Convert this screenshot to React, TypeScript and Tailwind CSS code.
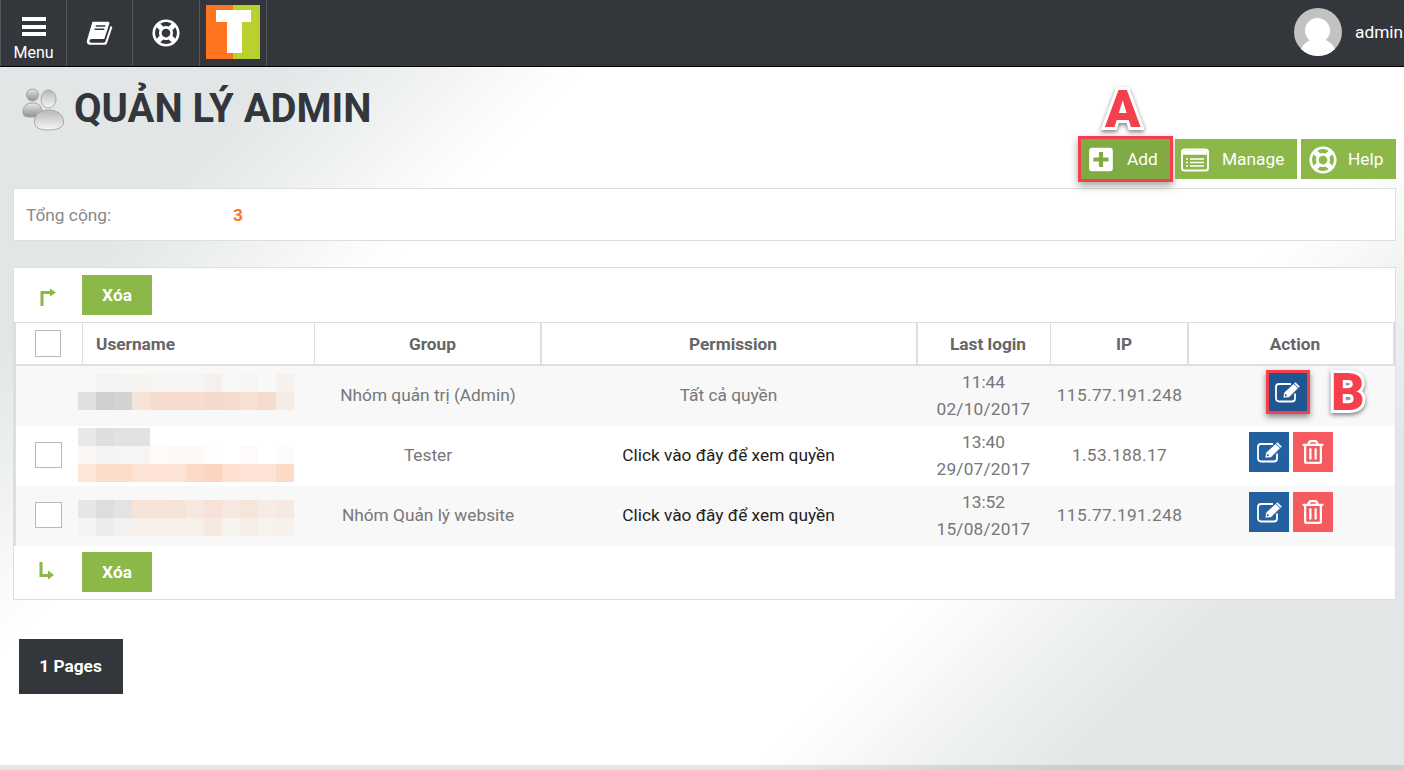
import { FaPlusSquare, FaRegLifeRing, FaRegTrashAlt } from 'react-icons/fa'

function Blur({ rows }: { rows: string[][] }) {
  return (
    <div className="flex flex-col">
      {rows.map((r, i) => (
        <div key={i} className="flex h-[18px]">
          {r.map((c, j) => (
            <div key={j} className="h-[18px] w-[18px]" style={{ backgroundColor: c }} />
          ))}
        </div>
      ))}
    </div>
  )
}

function EditIcon({ fill }: { fill: string }) {
  return (
    <svg viewBox="0 0 28 24" className="h-[24px] w-[28px]" fill="none">
      <path d="M20 13.500v5a3 3 0 0 1-3 3H4a3 3 0 0 1-3-3V7a3 3 0 0 1 3-3h12" stroke="white" strokeWidth="1.800" />
      <path d="M8 18l1-5.500L20.500 2l4.500 4.500L14 17.500z" fill="white" stroke={fill} strokeWidth="0.600" />
      <path d="M18.800 3.600l4.600 4.600" stroke={fill} strokeWidth="1" />
      <circle cx="10.800" cy="15.200" r="1" fill={fill} />
    </svg>
  )
}

const blur1 = [
  ['#f8f8f8', '#f3f3f3', '#f4f4f4', '#f7f3ef', '#f6f5f4', '#f6f5f4', '#f6f5f4', '#f5f0ec', '#f8f8f8', '#f6f5f4', '#f8f8f8', '#f6f1ed'],
  ['#e0e0e0', '#cfcfcf', '#d2d2d2', '#f6e3d9', '#f6dccf', '#f6dccf', '#f6dccf', '#f5d9cb', '#f6dccf', '#f6e0d4', '#f6dccf', '#f6ece6'],
]
const blur2 = [
  ['#e8e8e8', '#dedede', '#e2e2e2', '#e2e2e2', '#ffffff', '#ffffff', '#ffffff', '#ffffff', '#ffffff', '#ffffff', '#ffffff', '#ffffff'],
  ['#faf6f4', '#f4f3f2', '#f6f5f3', '#f6f5f3', '#fefbf9', '#fff9f5', '#fff9f5', '#fffefc', '#ffffff', '#fffafa', '#ffffff', '#fefcfa'],
  ['#fde6da', '#fddcca', '#fddcca', '#fde3d5', '#fde3d5', '#fde3d5', '#fcdac7', '#fcd5bf', '#fde0d0', '#fde3d5', '#fde3d5', '#fcdac7'],
]
const blur3 = [
  ['#e6e6e6', '#dddddd', '#e3e3e3', '#f6e4d9', '#f6e4d9', '#f6e2d6', '#f6e8e1', '#f7e2d7', '#f6e8e1', '#f5e5db', '#f6ece6', '#f6e9e3'],
  ['#f4f4f4', '#ebebeb', '#f1f1f1', '#f6efea', '#f6efea', '#f6efea', '#f6efea', '#f7e8e0', '#f6f2ed', '#f6eee9', '#f6f2ed', '#f7f0ed'],
]

const rows = [
  { bg: 'bg-[#f8f8f8]', check: false, blur: blur1, blurPos: 'pb-[8px]', group: 'Nhóm quản trị (Admin)', perm: 'Tất cả quyền', link: false, time: '11:44', date: '02/10/2017', ip: '115.77.191.248', del: false },
  { bg: 'bg-white', check: true, blur: blur2, blurPos: 'pb-[2px]', group: 'Tester', perm: 'Click vào đây để xem quyền', link: true, time: '13:40', date: '29/07/2017', ip: '1.53.188.17', del: true },
  { bg: 'bg-[#f8f8f8]', check: true, blur: blur3, blurPos: 'pt-[4px]', group: 'Nhóm Quản lý website', perm: 'Click vào đây để xem quyền', link: true, time: '13:52', date: '15/08/2017', ip: '115.77.191.248', del: true },
]

const cols = 'grid grid-cols-[67px_232px_227px_376px_133px_138px_206px]'
const callout =
  'font-black text-[#f5404c] [-webkit-text-stroke:6px_white] [paint-order:stroke_fill] [filter:drop-shadow(0_2px_2px_rgba(0,0,0,0.5))]'

function ActionBar({ dir, height }: { dir: 'up' | 'down'; height: string }) {
  return (
    <div className={`flex shrink-0 ${height} ${dir === 'up' ? 'pt-[7px]' : 'pt-[6px]'}`}>
      <div className="flex h-10 w-[68px] items-center pl-[25px] text-[#8cb84a]">
        {dir === 'up' ? (
          <svg viewBox="0 0 18 22" className="h-[22px] w-[18px]" fill="none" stroke="currentColor" strokeWidth="3">
            <path d="M3 22V8.500h10" />
            <path d="M11 4.500L17 8.500l-6 4z" fill="currentColor" stroke="none" />
          </svg>
        ) : (
          <svg viewBox="0 0 18 22" className="h-[22px] w-[18px]" fill="none" stroke="currentColor" strokeWidth="3">
            <path d="M2 1v13.500h9" />
            <path d="M9 9.500L15 14l-6 4.500z" fill="currentColor" stroke="none" />
          </svg>
        )}
      </div>
      <div className="flex h-10 w-[70px] items-center justify-center bg-[#8cb84a] pt-[1px] text-[17.300px] font-bold text-white">Xóa</div>
    </div>
  )
}

export default function App() {
  return (
    <div className="relative flex h-[770px] w-[1404px] flex-col overflow-hidden bg-[linear-gradient(135deg,#e2e6e6_16%,#ffffff_30%,#ffffff_70%,#e2e6e6_85%)] font-['Roboto','Noto_Sans',sans-serif] text-[#666]">
      <header className="flex h-[67px] shrink-0 items-stretch justify-between border-b border-black bg-[#33363b] text-white">
        <div className="flex">
          <div className="flex w-[67px] flex-col items-center border-x border-[#55585c] pt-[17px]">
            <div className="flex h-[19px] w-6 flex-col justify-between">
              <div className="h-[4px] bg-white" />
              <div className="h-[4px] bg-white" />
              <div className="h-[4px] bg-white" />
            </div>
            <span className="mt-[7px] text-base leading-[19px]">Menu</span>
          </div>
          <div className="flex w-[66px] items-center justify-center border-r border-[#55585c] pb-[1px]">
            <svg viewBox="0 0 26 24" className="h-[26px] w-[28px]">
              <path
                d="M6 1.500h14.500c1 0 1.500.7 1.200 1.600L17 17.500H5.500c-3 0-3 3.500-.3 3.500H16.500c.8 0 1.300-.4 1.500-1.100L22.800 5.500l1.700 1L19.500 21.500c-.3 1-1 1.500-2 1.500H4c-2.500 0-3.800-2-3-4.500z"
                fill="white"
              />
              <path d="M9 5.500h9M8 8.500h9" stroke="#33363b" strokeWidth="1.200" />
            </svg>
          </div>
          <div className="flex w-[67px] items-center justify-center border-r border-[#55585c] pb-[1px]">
            <FaRegLifeRing className="h-[28px] w-[28px]" />
          </div>
          <div className="flex w-[67px] items-center justify-center border-r border-[#55585c] pb-[2px]">
            <div className="relative flex h-[54px] w-[54px]">
              <div className="w-[27px] bg-[#ff7421]" />
              <div className="w-[27px] bg-[#bad02e]" />
              <div className="absolute left-[10px] top-[5px] h-[12px] w-[35px] bg-white" />
              <div className="absolute left-[21px] top-[5px] h-[43px] w-[15px] bg-white" />
            </div>
          </div>
        </div>
        <div className="flex items-center gap-[13px]">
          <div className="relative -mt-[2px] h-12 w-12 overflow-hidden rounded-full bg-[#c2c2c2]">
            <div className="absolute left-[11px] top-[10px] h-[25px] w-[25px] rounded-full bg-white" />
            <div className="absolute left-[6px] top-[31px] h-[30px] w-[36px] rounded-t-[16px] bg-white" />
          </div>
          <span className="w-[49px] whitespace-nowrap text-[17.300px]">admin</span>
        </div>
      </header>

      <div className="relative flex h-[121px] shrink-0 flex-col">
        <div className="flex items-center pl-[22px] pt-[17px]">
          <svg viewBox="0 0 44 44" className="h-[44px] w-[44px]">
            <defs>
              <linearGradient id="p1" x1="0" y1="0" x2="0" y2="1">
                <stop offset="0" stopColor="#e8e8e8" />
                <stop offset="1" stopColor="#8f8f8f" />
              </linearGradient>
              <linearGradient id="p2" x1="0" y1="0" x2="0" y2="1">
                <stop offset="0" stopColor="#b8b8b8" />
                <stop offset="1" stopColor="#f6f6f6" />
              </linearGradient>
            </defs>
            <circle cx="10.500" cy="8" r="6" fill="url(#p1)" stroke="#a0a0a0" />
            <path d="M1 25c0-6 4-9 9.500-9s9.500 3 9.500 9-3 5-9.500 5S1 30 1 25z" fill="url(#p1)" stroke="#a0a0a0" />
            <ellipse cx="26.500" cy="12" rx="7.500" ry="9" fill="url(#p2)" stroke="#a8a8a8" />
            <path d="M12.500 35c0-8 6-12 14-12s15 4 15 12c0 6-7 8-15 8s-14-2-14-8z" fill="url(#p2)" stroke="#a8a8a8" />
          </svg>
          <h1 className="ml-[8px] text-[40px] font-bold leading-[50px] text-[#33363b]">QUẢN LÝ ADMIN</h1>
        </div>
        <div className="absolute right-[8px] top-[72px] flex gap-[4px] text-[17.300px] text-white">
          <div className="mr-[1px] flex h-10 w-[89px] items-center bg-[#80aa44] pl-[8px] pt-[1px] shadow-[0_0_0_3px_#f4404c,0_4px_8px_3px_rgba(0,0,0,0.35)]">
            <FaPlusSquare className="h-[27px] w-[24px]" />
            <span className="ml-[14px]">Add</span>
          </div>
          <div className="flex h-10 w-[122px] items-center bg-[#8cb84a] pl-[6px] pt-[1px]">
            <svg viewBox="0 0 28 24" className="h-[24px] w-[28px]" fill="none" stroke="white">
              <rect x="1" y="1.500" width="26" height="21" rx="2.500" strokeWidth="2" />
              <path d="M1 4.500h26" strokeWidth="4.500" />
              <path d="M5 11h2M9 11h14M5 14.500h2M9 14.500h14M5 18h2M9 18h14" strokeWidth="1.500" />
            </svg>
            <span className="ml-[13px]">Manage</span>
          </div>
          <div className="flex h-10 w-[95px] items-center bg-[#8cb84a] pl-[8px] pt-[1px]">
            <FaRegLifeRing className="h-[28px] w-[28px]" />
            <span className="ml-[11px]">Help</span>
          </div>
        </div>
        <div className={`absolute left-[1105px] top-[17px] text-[52px] leading-[52px] ${callout}`}>A</div>
      </div>

      <div className="ml-[13px] mr-[8px] flex h-[53px] shrink-0 items-center border border-[#dedede] bg-white pl-[12px] pt-[2px] text-[17.300px]">
        <span className="w-[207px] text-[#888]">Tổng cộng:</span>
        <span className="font-bold text-[#ff7421]">3</span>
      </div>

      <div className="ml-[13px] mr-[8px] mt-[26px] flex h-[333px] shrink-0 flex-col border border-[#dedede] bg-white">
        <ActionBar dir="up" height="h-[54px]" />

        <div className="border-l-[2px] border-[#dedede]">
          <div className={`${cols} h-[44px] border-b-[2px] border-t border-[#dedede] text-[17.300px] font-bold text-[#666]`}>
            <div className="flex items-center justify-center border-r border-[#dedede] pr-[2px]">
              <div className="h-[27px] w-[26px] border border-[#b8b8b8] bg-white" />
            </div>
            <div className="flex items-center border-r border-[#dedede] pl-[13px] pt-[2px]">Username</div>
            <div className="flex items-center justify-center border-r-[2px] border-[#dedede] pl-[10px] pt-[2px]">Group</div>
            <div className="flex items-center justify-center border-r-[2px] border-[#dedede] pl-[8px] pt-[2px]">Permission</div>
            <div className="flex items-center justify-center border-r border-[#dedede] pl-[8px] pt-[2px]">Last login</div>
            <div className="flex items-center justify-center border-r-[2px] border-[#dedede] pl-[10px] pt-[2px]">IP</div>
            <div className="flex items-center justify-center border-r-[2px] border-[#dedede] pl-[8px] pt-[2px]">Action</div>
          </div>

          {rows.map((r) => (
            <div key={r.time} className={`${cols} h-[60px] ${r.bg} text-[17.300px] text-[#777]`}>
              <div className="flex items-center justify-center pb-[2px] pr-[2px]">
                {r.check && <div className="h-[26px] w-[27px] border border-[#b8b8b8] bg-white" />}
              </div>
              <div className={`-ml-[5px] flex items-center ${r.blurPos}`}>
                <Blur rows={r.blur} />
              </div>
              <div className="flex items-center justify-center whitespace-nowrap pr-[1px]">{r.group}</div>
              <div className={`flex items-center justify-center whitespace-nowrap pr-[3px] ${r.link ? 'text-[#222]' : ''}`}>{r.perm}</div>
              <div className="flex flex-col items-center justify-center pr-[2px] leading-[27px]">
                <span>{r.time}</span>
                <span className="tracking-[0.2px]">{r.date}</span>
              </div>
              <div className="flex items-center justify-center pr-[1px] tracking-[0.35px]">{r.ip}</div>
              <div className="flex items-center justify-center gap-[4px] pb-[8px] pr-[2px]">
                {r.del ? (
                  <>
                    <div className="flex h-10 w-10 items-center justify-center bg-[#23609f] pl-[3px]">
                      <EditIcon fill="#23609f" />
                    </div>
                    <div className="flex h-10 w-10 items-center justify-center bg-[#f45a5e] text-white">
                      <FaRegTrashAlt className="h-[24px] w-[24px]" />
                    </div>
                  </>
                ) : (
                  <div className="relative left-[-3px] flex h-11 w-11 items-center justify-center border-[3px] border-[#f4404c] bg-[#1f5590] pl-[2px] shadow-[0_3px_6px_rgba(0,0,0,0.45)]">
                    <EditIcon fill="#1f5590" />
                  </div>
                )}
              </div>
            </div>
          ))}
        </div>

        <ActionBar dir="down" height="h-[53px]" />
      </div>

      <div className="ml-[19px] mt-[39px] flex h-[55px] w-[104px] shrink-0 items-center justify-center bg-[#33363b] pr-[1px] pt-[1px] text-[17.300px] font-bold text-white">
        1 Pages
      </div>

      <div className={`absolute left-[1331px] top-[368px] text-[52px] leading-[50px] ${callout}`}>B</div>
      <div className="absolute bottom-0 left-0 h-[5px] w-full bg-black/10" />
    </div>
  )
}
